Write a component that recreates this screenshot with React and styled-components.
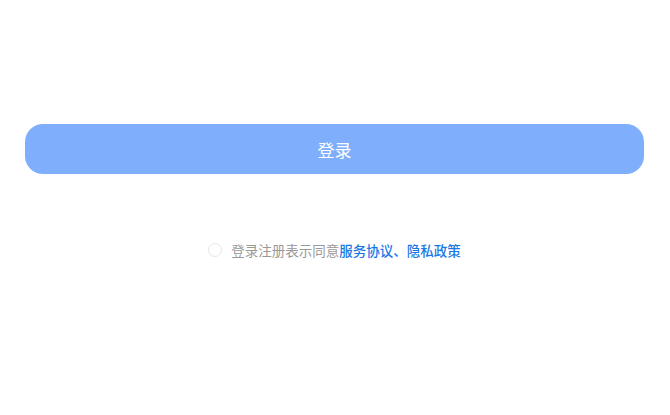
import React, { useState } from 'react';
import styled, { createGlobalStyle } from 'styled-components';

const GlobalStyle = createGlobalStyle`
    html, body {
        margin: 0;
        padding: 0;
        background: #ffffff;
        font-family: "Noto Sans CJK SC", "Noto Sans", sans-serif;
    }
`;

const Page = styled.div`
    width: 670px;
    height: 415px;
    box-sizing: border-box;
    padding: 124px 26px 0 25px;
    display: flex;
    flex-direction: column;
    align-items: stretch;
`;

const LoginButton = styled.button`
    height: 50px;
    border: none;
    border-radius: 18px;
    background-color: #7eaefc;
    color: #ffffff;
    font-family: inherit;
    font-size: 17px;
    cursor: pointer;
    display: flex;
    align-items: center;
    justify-content: center;
`;

const Agreement = styled.div`
    margin-top: 66px;
    display: flex;
    align-items: center;
    justify-content: center;
    gap: 9px;
`;

const Radio = styled.span`
    width: 12px;
    height: 12px;
    border-radius: 50%;
    border: 1px solid ${(p) => (p.checked ? '#3a86f5' : '#e6e6e6')};
    background: ${(p) => (p.checked ? '#3a86f5' : '#ffffff')};
    cursor: pointer;
`;

const Text = styled.span`
    font-size: 13.5px;
    color: #999999;
`;

const Links = styled.span`
    color: #1a78e6;
    font-weight: 500;
`;

const Link = styled.a`
    color: inherit;
    text-decoration: none;
`;

const App = () => {
    const [agreed, setAgreed] = useState(false);

    return (
        <>
            <GlobalStyle />
            <Page>
                <LoginButton>登录</LoginButton>
                <Agreement>
                    <Radio checked={agreed} onClick={() => setAgreed(!agreed)} />
                    <Text>
                        登录注册表示同意
                        <Links>
                            <Link href="#">服务协议</Link>、<Link href="#">隐私政策</Link>
                        </Links>
                    </Text>
                </Agreement>
            </Page>
        </>
    );
};

export default App;
